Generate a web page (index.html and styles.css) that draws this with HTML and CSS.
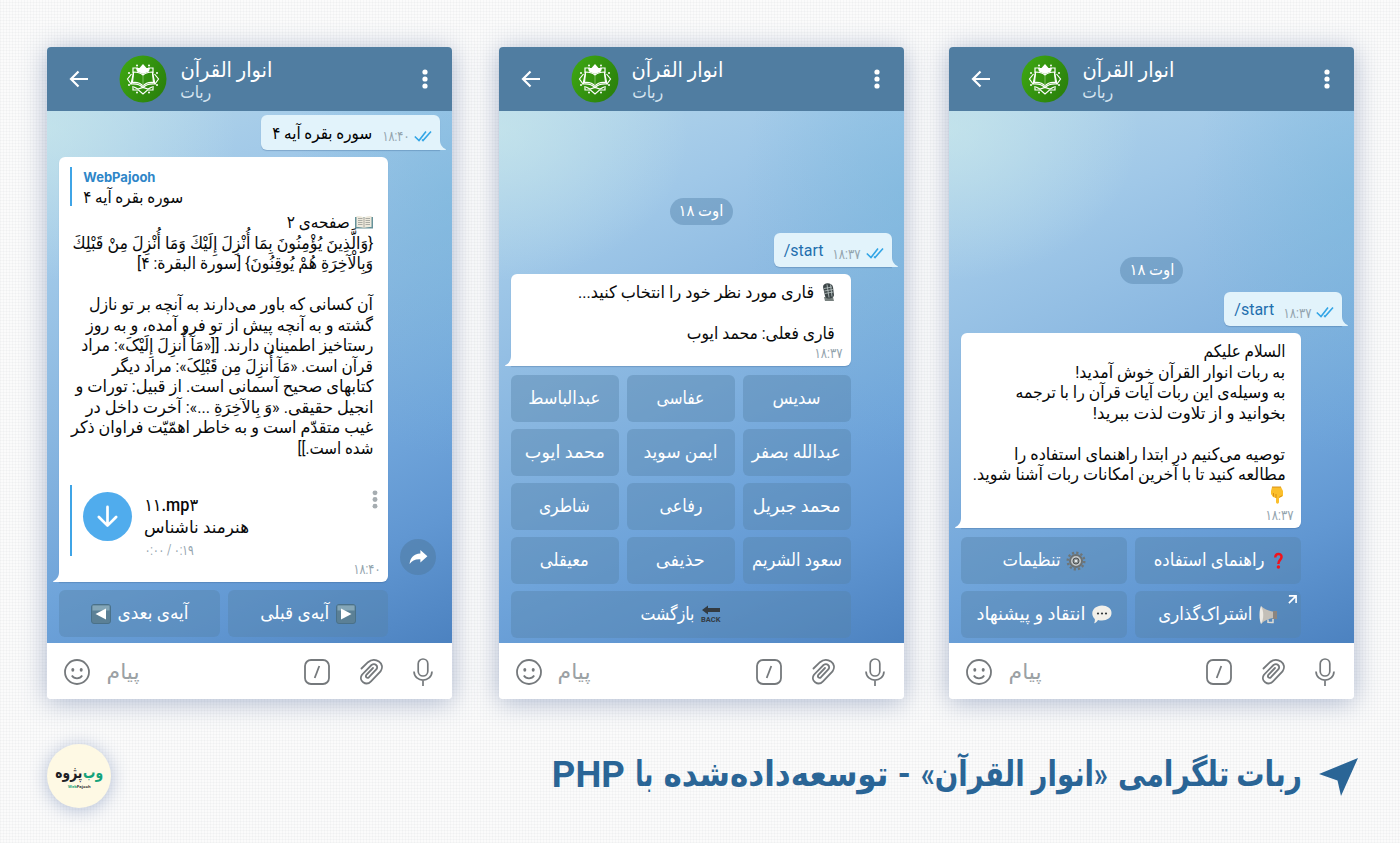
FILE: index.html
```html
<!DOCTYPE html>
<html lang="fa">
<head>
<meta charset="utf-8">
<title>ربات تلگرامی انوار القرآن</title>
<link rel="stylesheet" href="styles.css">
</head>
<body>
<svg class="defs" width="0" height="0">
  <symbol id="back" viewBox="0 0 20 18"><path d="M19 9H2M9.500 1.500L2 9l7.500 7.500" fill="none" stroke="#fff" stroke-width="2.200"/></symbol>
  <symbol id="dots" viewBox="0 0 6 20"><circle cx="3" cy="3" r="2.600"/><circle cx="3" cy="10" r="2.600"/><circle cx="3" cy="17" r="2.600"/></symbol>
  <symbol id="quran" viewBox="0 0 48 48">
    <circle cx="24" cy="24" r="23.500" fill="url(#green)"/>
    <g fill="none" stroke="#fff" stroke-width="1.200">
      <path d="M19 13h-5v5M29 13h5v5M14 31v4h5.500l4.500 4 4.500-4H34v-4M12.500 19l-4 5 3.500 5M35.500 19l4 5-3.500 5"/>
      <path d="M14.500 18l-2.500 11c5-.5 9 .5 12 3.500 3-3 7-4 12-3.500L33.500 18"/>
      <path d="M14.500 17l-1 10.500c4-.5 8 .5 10.500 3.500 2.500-3 6.500-4 10.500-3.500L33.500 17c-4 0-7 1-9.500 3-2.500-2-5.500-3-9.500-3z"/>
      <path d="M15 32l4 2 5-1.500 5 1.500 4-2"/>
    </g>
    <path d="M24 9l3.500 4H31l-1 3.500-6 2.500-6-2.500-1-3.500h3.500z" fill="#fff"/>
    <path d="M24 20v11" stroke="#8fc776" stroke-width=".8"/>
    <g fill="#fff"><circle cx="18" cy="10.500" r="1"/><circle cx="30" cy="10.500" r="1"/><circle cx="10" cy="18" r="1"/><circle cx="38" cy="18" r="1"/><circle cx="10" cy="30" r="1"/><circle cx="38" cy="30" r="1"/><circle cx="18" cy="37.500" r="1"/><circle cx="30" cy="37.500" r="1"/></g>
  </symbol>
  <linearGradient id="green" x1="0" x2="1" y2=".6"><stop offset="0" stop-color="#3fa912"/><stop offset="1" stop-color="#2b820c"/></linearGradient>
  <symbol id="checks" viewBox="0 0 18 12"><path d="M.8 6.500L5 10.500 12 1.500M8 9.500l1 1L17 1.500" fill="none" stroke="#32a5e6" stroke-width="1.600"/></symbol>
  <symbol id="tail" viewBox="0 0 12 18"><path d="M0 0h6v8c0 4 1.800 7.500 6 9.300l-.5.700H0z"/></symbol>
  <symbol id="smile" viewBox="0 0 26 26"><g fill="none" stroke="#75797c" stroke-width="1.800"><circle cx="13" cy="13" r="12"/><path d="M7.800 16.500c2.500 3.700 7.900 3.700 10.400 0"/></g><g fill="#75797c"><ellipse cx="8.800" cy="10.800" rx="1.500" ry="1.900"/><ellipse cx="17.200" cy="10.800" rx="1.500" ry="1.900"/></g></symbol>
  <symbol id="slash" viewBox="0 0 26 26"><g fill="none" stroke="#75797c" stroke-width="1.800"><rect x="1" y="1" width="24" height="24" rx="6"/><path d="M15.300 7L10.700 19"/></g></symbol>
  <symbol id="clip" viewBox="0 0 24 26"><path d="M2.500 9.500L9 3.200c7-6 18 1 12.500 9.300L12 22.300c-5 5.200-13-.6-9-6.600L12.500 6c3.500-2.500 7 1 5 4.200L10 18.200c-2 1.600-4-.5-2.600-2.400L14 9" fill="none" stroke="#75797c" stroke-width="1.800" stroke-linecap="round"/></symbol>
  <symbol id="mic" viewBox="0 0 20 28"><g fill="none" stroke="#75797c" stroke-width="1.700"><rect x="5.200" y="1" width="9.600" height="17" rx="4.800"/><path d="M1 13.500c.5 11.500 17.500 11.500 18 0M10 22v6"/></g></symbol>
  <symbol id="book" viewBox="0 0 18 13"><path d="M0 1h18v11.500H0z" fill="#66929a"/><path d="M1.500 0C4 0 7 .3 9 1.500 11 .3 14 0 16.500 0v11C14 11 11 11 9 12.200 7 11 4 11 1.500 11z" fill="#eee9dc"/><path d="M9 1.500v10.700M3 2.500h4.500M3 4.500h4.500M3 6.500h4.500M3 8.500h4.500M10.500 2.500H15M10.500 4.500H15M10.500 6.500H15M10.500 8.500H15" stroke="#8d908b" stroke-width=".7"/></symbol>
  <symbol id="studio" viewBox="0 0 13 18"><path d="M2 14h9l1 4H3z" fill="#78817f"/><path d="M1 4c0-5 9-5 10 0l1 8c0 4-8 5-9 1z" fill="#3d4648"/><path d="M2 5.500l8-1.500M2.300 8l8.500-1.500M2.800 10.500l8.500-1.500M5 1.500l2 13M8.500 1.500l1.500 12" stroke="#bcc8c6" stroke-width=".8"/></symbol>
  <symbol id="finger" viewBox="0 0 12 18"><path d="M1 1h9l2 4v5l-3 1.500h-1V16c0 2.200-3 2.200-3 0v-4L2 11 0 8V5z" fill="#fbbf2b"/><path d="M5 12V8M2.500 10.500V7M8 11.500l3-1.800M1 1h9" stroke="#d58b12" stroke-width=".9" fill="none"/></symbol>
  <symbol id="play" viewBox="0 0 20 20"><rect x=".5" y=".5" width="19" height="19" rx="2.500" fill="#5b8096" stroke="#4a7189"/><path d="M1.500 1.500h17v5h-17z" fill="#84a6b7"/><path d="M5 4.500l10.500 5.500L5 15.500z" fill="#fff"/></symbol>
  <symbol id="backarrow" viewBox="0 0 20 18"><path d="M1 5l6-4.500V3h12v4H7v2.500z" fill="#333b42"/></symbol>
  <symbol id="question" viewBox="0 0 9 17"><path d="M1.300 5.500C1 .8 7.700.8 7.500 5c0 3-3.200 3-3.100 7" fill="none" stroke="#f3121b" stroke-width="2.500"/><circle cx="4.400" cy="15" r="1.700" fill="#f3121b"/></symbol>
  <symbol id="gear" viewBox="0 0 20 20"><circle cx="10" cy="10" r="8.300" fill="none" stroke="#6e7577" stroke-width="2.400" stroke-dasharray="2.200 2.146"/><circle cx="10" cy="10" r="6" fill="#c3c7c8" stroke="#6b7173" stroke-width="2"/><circle cx="10" cy="10" r="3" fill="#8b9192" stroke="#4d5153" stroke-width="1"/><circle cx="10" cy="10" r="1.300" fill="#e6e9ea"/></symbol>
  <symbol id="horn" viewBox="0 0 19 20"><path d="M2 1c4 3.500 8 5 14 6v6c-6 0-10 2-14 6z" fill="#c3bfb8"/><path d="M2 1c3 5 3 13 0 18C0 15 0 5 2 1z" fill="#edeae4"/><path d="M14 6h4v8h-4z" fill="#8b8580"/><path d="M9 14.500v2.800l5 .2V14" fill="none" stroke="#dedbd4" stroke-width="1.500"/></symbol>
  <symbol id="speech" viewBox="0 0 20 19"><path d="M10 .5c5 0 9.500 2.800 9.500 7.500S15 15.500 10 15.500c-1.500 0-2.800-.1-4-.5-1 2-2.500 3-4 3.300.8-1.300 1-2.600.8-4.300C-3 8 2 .5 10 .5z" fill="#f2f0ea"/><g fill="#34383b"><circle cx="6" cy="8.500" r="1.100"/><circle cx="10" cy="8.500" r="1.100"/><circle cx="14" cy="8.500" r="1.100"/></g></symbol>
</svg>

<main class="phones">
  <section class="phone">
    <header class="bar">
      <svg class="i-back"><use href="#back"/></svg>
      <svg class="avatar"><use href="#quran"/></svg>
      <div class="who"><b class="name"><span class="fit" data-w="92">انوار القرآن</span></b><span class="sub fit" data-w="31">ربات</span></div>
      <svg class="i-dots"><use href="#dots"/></svg>
    </header>
    <div class="chat">
      <div class="out ayah">
        <span class="fit outtext" data-w="100">سوره بقره آیه ۴</span><span class="time fit" data-w="27">۱۸:۴۰</span><svg class="i-checks"><use href="#checks"/></svg>
        <svg class="tail-r"><use href="#tail"/></svg>
      </div>
      <div class="in tall">
        <div class="reply"><strong class="author">WebPajooh</strong><span class="fit" data-w="100">سوره بقره آیه ۴</span></div>
        <div class="text" dir="rtl">
          <p><svg class="e-book"><use href="#book"/></svg><span class="fit" data-w="63">صفحه‌ی ۲</span></p>
          <p><span class="fit" data-w="301">{وَالَّذِينَ يُؤْمِنُونَ بِمَا أُنْزِلَ إِلَيْكَ وَمَا أُنْزِلَ مِنْ قَبْلِكَ</span></p>
          <p><span class="fit" data-w="236">وَبِالْآخِرَةِ هُمْ يُوقِنُونَ} [سورة البقرة: ۴]</span></p>
          <p></p>
          <p><span class="fit" data-w="284">آن کسانی که باور می‌دارند به آنچه بر تو نازل</span></p>
          <p><span class="fit" data-w="287">گشته و به آنچه پیش از تو فرو آمده، و به روز</span></p>
          <p><span class="fit" data-w="292">رستاخیز اطمینان دارند. [[«مَآ أُنزِلَ إِلَیْکَ»: مراد</span></p>
          <p><span class="fit" data-w="261">قرآن است. «مَآ أُنزِلَ مِن قَبْلِکَ»: مراد دیگر</span></p>
          <p><span class="fit" data-w="298">کتابهای صحیح آسمانی است. از قبیل: تورات و</span></p>
          <p><span class="fit" data-w="288">انجیل حقیقی. «وَ بِالآخِرَةِ ...»: آخرت داخل در</span></p>
          <p><span class="fit" data-w="302">غیب متقدّم است و به خاطر اهمّیّت فراوان ذکر</span></p>
          <p><span class="fit" data-w="76">شده است.]]</span></p>
        </div>
        <div class="audio">
          <div class="load"><svg viewBox="0 0 24 24"><path d="M12 2v19M3 12.500l9 9 9-9" fill="none" stroke="#fff" stroke-width="2.800" stroke-linecap="round" stroke-linejoin="round"/></svg></div>
          <div class="track"><strong class="file fit" data-w="54" data-dir="ltr">۱۱.mp۳</strong><span class="fit" data-w="105">هنرمند ناشناس</span><span class="time fit" data-w="49" data-dir="ltr">۰:۰۰ / ۰:۱۹</span></div>
          <svg class="a-dots"><use href="#dots"/></svg>
        </div>
        <span class="time fit stamp" data-w="27">۱۸:۴۰</span>
        <svg class="tail-l"><use href="#tail"/></svg>
      </div>
      <div class="share"><svg viewBox="0 0 20 16"><path d="M12 0l7.500 6.700L12 13.400V9.800C6.500 9.500 3 11 .5 15 1 8.500 4.500 4 12 3.600z" fill="#fff"/></svg></div>
      <div class="keys two narrow">
        <div class="key"><span class="fit" data-w="71">آیه‌ی بعدی</span><svg class="e-play flip"><use href="#play"/></svg></div>
        <div class="key"><svg class="e-play"><use href="#play"/></svg><span class="fit" data-w="69">آیه‌ی قبلی</span></div>
      </div>
    </div>
    <footer class="compose">
      <svg class="i-smile"><use href="#smile"/></svg><span class="hint fit" data-w="33">پیام</span>
      <svg class="i-slash"><use href="#slash"/></svg><svg class="i-clip"><use href="#clip"/></svg><svg class="i-mic"><use href="#mic"/></svg>
    </footer>
  </section>

  <section class="phone middle">
    <header class="bar">
      <svg class="i-back"><use href="#back"/></svg>
      <svg class="avatar"><use href="#quran"/></svg>
      <div class="who"><b class="name"><span class="fit" data-w="92">انوار القرآن</span></b><span class="sub fit" data-w="31">ربات</span></div>
      <svg class="i-dots"><use href="#dots"/></svg>
    </header>
    <div class="chat">
      <div class="date d2"><span class="fit" data-w="45">اوت ۱۸</span></div>
      <div class="out">
        <span class="cmd">/start</span><span class="time fit" data-w="28">۱۸:۳۷</span><svg class="i-checks"><use href="#checks"/></svg>
        <svg class="tail-r"><use href="#tail"/></svg>
      </div>
      <div class="in reciter">
        <div class="text" dir="rtl">
          <p><svg class="e-studio"><use href="#studio"/></svg><span class="fit" data-w="236">قاری مورد نظر خود را انتخاب کنید...</span></p>
          <p></p>
          <p><span class="fit" data-w="148">قاری فعلی: محمد ایوب</span></p>
        </div>
        <span class="time fit stamp" data-w="28">۱۸:۳۷</span>
        <svg class="tail-l"><use href="#tail"/></svg>
      </div>
      <div class="keys three">
        <div class="key"><span class="fit" data-w="72">عبدالباسط</span></div>
        <div class="key"><span class="fit" data-w="48">عفاسی</span></div>
        <div class="key"><span class="fit" data-w="48">سدیس</span></div>
        <div class="key"><span class="fit" data-w="80">محمد ایوب</span></div>
        <div class="key"><span class="fit" data-w="74">ایمن سوید</span></div>
        <div class="key"><span class="fit" data-w="89">عبدالله بصفر</span></div>
        <div class="key"><span class="fit" data-w="51">شاطری</span></div>
        <div class="key"><span class="fit" data-w="43">رفاعی</span></div>
        <div class="key"><span class="fit" data-w="88">محمد جبریل</span></div>
        <div class="key"><span class="fit" data-w="49">معیقلی</span></div>
        <div class="key"><span class="fit" data-w="49">حذیفی</span></div>
        <div class="key"><span class="fit" data-w="90">سعود الشریم</span></div>
        <div class="key full"><span class="e-back"><svg><use href="#backarrow"/></svg><small>BACK</small></span><span class="fit" data-w="54">بازگشت</span></div>
      </div>
    </div>
    <footer class="compose">
      <svg class="i-smile"><use href="#smile"/></svg><span class="hint fit" data-w="33">پیام</span>
      <svg class="i-slash"><use href="#slash"/></svg><svg class="i-clip"><use href="#clip"/></svg><svg class="i-mic"><use href="#mic"/></svg>
    </footer>
  </section>

  <section class="phone">
    <header class="bar">
      <svg class="i-back"><use href="#back"/></svg>
      <svg class="avatar"><use href="#quran"/></svg>
      <div class="who"><b class="name"><span class="fit" data-w="92">انوار القرآن</span></b><span class="sub fit" data-w="31">ربات</span></div>
      <svg class="i-dots"><use href="#dots"/></svg>
    </header>
    <div class="chat">
      <div class="date d3"><span class="fit" data-w="45">اوت ۱۸</span></div>
      <div class="out">
        <span class="cmd">/start</span><span class="time fit" data-w="28">۱۸:۳۷</span><svg class="i-checks"><use href="#checks"/></svg>
        <svg class="tail-r"><use href="#tail"/></svg>
      </div>
      <div class="in welcome">
        <div class="text" dir="rtl">
          <p><span class="fit" data-w="82">السلام علیکم</span></p>
          <p><span class="fit" data-w="210">به ربات انوار القرآن خوش آمدید!</span></p>
          <p><span class="fit" data-w="270">به وسیله‌ی این ربات آیات قرآن را با ترجمه</span></p>
          <p><span class="fit" data-w="193">بخوانید و از تلاوت لذت ببرید!</span></p>
          <p></p>
          <p><span class="fit" data-w="271">توصیه می‌کنیم در ابتدا راهنمای استفاده را</span></p>
          <p><span class="fit" data-w="313">مطالعه کنید تا با آخرین امکانات ربات آشنا شوید.</span></p>
          <p><svg class="e-finger"><use href="#finger"/></svg></p>
        </div>
        <span class="time fit stamp" data-w="28">۱۸:۳۷</span>
        <svg class="tail-l"><use href="#tail"/></svg>
      </div>
      <div class="keys two">
        <div class="key"><svg class="e-gear"><use href="#gear"/></svg><span class="fit" data-w="58">تنظیمات</span></div>
        <div class="key help"><svg class="e-question"><use href="#question"/></svg><span class="fit" data-w="111">راهنمای استفاده</span></div>
        <div class="key"><svg class="e-speech"><use href="#speech"/></svg><span class="fit" data-w="109">انتقاد و پیشنهاد</span></div>
        <div class="key"><svg class="e-horn"><use href="#horn"/></svg><span class="fit" data-w="94">اشتراک‌گذاری</span>
          <svg class="ext" viewBox="0 0 10 10"><path d="M1 1h8v8M9 1L1 9" fill="none" stroke="#fff" stroke-width="1.800"/></svg></div>
      </div>
    </div>
    <footer class="compose">
      <svg class="i-smile"><use href="#smile"/></svg><span class="hint fit" data-w="33">پیام</span>
      <svg class="i-slash"><use href="#slash"/></svg><svg class="i-clip"><use href="#clip"/></svg><svg class="i-mic"><use href="#mic"/></svg>
    </footer>
  </section>
</main>

<div class="caption">
  <div class="brand"><div class="brand-name" dir="rtl"><span class="fit web" data-w="20">وب</span><span class="fit" data-w="27">پژوه</span></div><small><i>Web</i>Pajooh</small></div>
  <h1 dir="rtl">
    <svg class="plane" viewBox="0 0 39 38"><path d="M39 0L22 38 18.500 22.500 0 16z" fill="#2a6596"/></svg>
    <span class="fit" data-w="184">ربات تلگرامی</span>
    <span class="fit" data-w="187">«انوار القرآن»</span>
    <span class="fit" data-w="13">-</span>
    <span class="fit" data-w="225">توسعه‌داده‌شده</span>
    <span class="fit" data-w="18">با</span>
    <span class="fit php" data-w="73" data-dir="ltr">PHP</span>
  </h1>
</div>
<script src="fit.js"></script>
</body>
</html>
```

FILE: styles.css
```css
* { box-sizing: border-box; }
body {
  margin: 0; width: 1400px; height: 843px; overflow: hidden;
  font-family: Roboto, "DejaVu Sans", sans-serif;
  background-color: #fbfbfb;
  background-image:
    repeating-linear-gradient(90deg, rgba(110,120,130,.045) 0 1px, transparent 1px 3px),
    repeating-linear-gradient(0deg, rgba(110,120,130,.045) 0 1px, transparent 1px 3px);
}
svg { display: block; flex: none; }
.defs { position: absolute; }
.fit { display: inline-block; white-space: nowrap; flex: none; }
.fit > bdi { display: inline-block; transform-origin: right center; }
p { margin: 0; }

.phones { display: flex; padding: 47px 0 0 47.300px; }
.phone {
  width: 405px; height: 652px; border-radius: 4px; flex: none;
  display: flex; flex-direction: column;
  box-shadow: 0 3px 26px rgba(80,105,155,.45);
}
.middle { margin: 0 45.600px 0 46.400px; }
.bar {
  height: 64px; background: #507da1; border-radius: 4px 4px 0 0;
  display: flex; align-items: center; padding: 0 24px 0 22px; color: #fff;
}
.i-back { width: 20px; height: 18px; margin-right: 30px; }
.avatar { width: 48px; height: 48px; }
.who { flex: 1; margin-left: 13px; display: flex; flex-direction: column; align-items: flex-start; }
.name { font-weight: 400; font-size: 21px; line-height: 24px; height: 24px; margin-top: 2px; }
.sub { font-size: 17px; line-height: 19px; color: #d5e4f0; margin-top: 1px; }
.i-dots { width: 6px; height: 20px; fill: #fff; }

.chat {
  height: 532px; position: relative; padding: 0 12px;
  display: flex; flex-direction: column;
  background:
    radial-gradient(ellipse 190px 150px at 0 20px, rgba(205,235,236,.6), transparent),
    radial-gradient(ellipse 160px 260px at 100% 90px, rgba(120,185,220,.45), transparent),
    linear-gradient(155deg, #b4d6ea 0%, #a0c8e8 22%, #88b6e0 46%, #6fa4da 68%, #6197d2 82%, #4c82c0 100%);
}
.out {
  position: relative; align-self: flex-end; height: 34px; width: 118px; background: #e2f3fb;
  border-radius: 6px 6px 0 6px; display: flex; align-items: center; padding: 0 9px 0 10px;
  box-shadow: 0 1px 1px rgba(50,90,140,.3); font-size: 17px; flex: none;
}
.ayah { width: 179px; height: 35px; margin-top: 4px; padding-left: 11px; }
.cmd { color: #1f6fae; width: 49px; font-size: 16px; flex: none; }
.outtext { margin-right: 10px; }
.time { font-size: 14px; color: #93a4ae; line-height: 14px; }
.out .time { margin: 7px 5px 0 0; }
.i-checks { width: 18px; height: 12px; margin-top: 6px; }
.tail-r, .tail-l { position: absolute; bottom: 0; width: 12px; height: 18px; fill: #e2f3fb; }
.tail-r { right: -6px; }
.tail-l { left: -6px; fill: #fff; transform: scaleX(-1); }
.in {
  position: relative; width: 340px; background: #fff; border-radius: 6px 6px 6px 0; flex: none;
  margin-top: 7px; box-shadow: 0 1px 1px rgba(50,90,140,.3); font-size: 17px; color: #08090a;
}
.tall { width: 329px; height: 425px; padding: 10px 15px 0 11px; }
.reciter { height: 92px; padding: 8px 16px 0; }
.welcome { height: 195px; padding: 8px 16px 0; }
.text p { height: 20.550px; line-height: 20.550px; display: flex; align-items: center; }
.reply {
  border-left: 2px solid #3fa4e6; height: 39px; padding-left: 11px; margin-bottom: 6px;
  display: flex; flex-direction: column; line-height: 21px;
}
.author { color: #2e86c8; font: 700 13px/20px Inter, sans-serif; }
.audio { display: flex; margin-top: 26px; height: 71px; border-left: 2px solid #3fa4e6; padding: 7px 0 0 11px; }
.load { width: 49px; height: 49px; border-radius: 50%; background: #50aced; display: flex; align-items: center; justify-content: center; }
.load svg { width: 23px; height: 23px; }
.track { flex: 1; margin-left: 12px; margin-top: 2px; display: flex; flex-direction: column; align-items: flex-start; line-height: 23px; }
.file { font-weight: 500; font-size: 17.500px; line-height: 23px; height: 22px; }
.track .time { margin-top: 4px; }
.a-dots { width: 6px; height: 19px; fill: #a6adb1; margin-right: -5px; margin-top: -2px; }
.stamp { position: absolute; right: 8px; bottom: 6px; }
.share {
  position: absolute; left: 353px; top: 428px; width: 36px; height: 36px; border-radius: 50%;
  background: rgba(80,125,165,.6); display: flex; align-items: center; justify-content: center;
}
.share svg { width: 19px; height: 15px; }
.date {
  align-self: center; width: 63px; height: 27px; border-radius: 14px; background: rgba(85,130,170,.45);
  color: #fff; font-size: 16px; display: flex; align-items: center; justify-content: center; flex: none;
  margin: 87px 0 8px; padding-bottom: 2px;
}
.d3 { margin-top: 146px; }

.keys { display: grid; gap: 7px 8px; width: 340px; margin-top: 9px; grid-auto-rows: 47px; }
.two { grid-template-columns: 1fr 1fr; }
.three { grid-template-columns: repeat(3, 1fr); }
.narrow { width: 329px; margin-top: 8px; }
.full { grid-column: 1 / -1; }
.key {
  position: relative; background: rgba(85,130,170,.42); border-radius: 6px; color: #fff; font-size: 18px;
  display: flex; flex-direction: row-reverse; align-items: center; justify-content: center; gap: 6px;
}
.key .fit { margin-bottom: 3px; }
.help { padding-right: 0; }
.ext { position: absolute; right: 4px; top: 4px; width: 9px; height: 9px; }
.e-book { width: 18px; height: 13px; margin-left: 6px; }
.e-studio { width: 13px; height: 18px; margin-left: 8px; }
.e-finger { width: 12px; height: 18px; margin-right: 2px; }
.e-play { width: 20px; height: 20px; }
.flip { transform: scaleX(-1); }
.e-back { width: 20px; height: 19px; display: flex; flex-direction: column; align-items: center; color: #333b42; }
.e-back svg { width: 20px; height: 18px; margin-bottom: -7px; }
.e-back small { font: 700 7.500px/8px Roboto, sans-serif; }
.e-question { width: 9px; height: 17px; margin-left: 4px; }
.e-gear { width: 20px; height: 20px; }
.e-horn { width: 19px; height: 20px; }
.e-speech { width: 20px; height: 19px; }

.compose {
  height: 56px; background: #fff; border-radius: 0 0 4px 4px; display: flex; align-items: center;
  padding: 1px 19px 0 17px;
}
.i-smile { width: 26px; height: 26px; margin-right: 16px; }
.hint { color: #9ba1a4; font-size: 21px; }
.i-slash { width: 26px; height: 26px; margin-left: auto; margin-right: 29px; }
.i-clip { width: 24px; height: 26px; margin-right: 30px; }
.i-mic { width: 20px; height: 28px; }

.caption { display: flex; justify-content: space-between; align-items: flex-start; padding: 45px 42px 0 47.300px; }
.brand {
  width: 64px; height: 64px; border-radius: 50%; background: #fef9e4; box-shadow: 0 2px 18px rgba(70,100,160,.4);
  display: flex; flex-direction: column; align-items: center;
}
.brand-name { display: flex; font-size: 16px; font-weight: 700; line-height: 18px; margin-top: 20px; color: #1e2226; }
.web { color: #15a37b; }
.brand small { font: 700 4px/6px "Open Sans", sans-serif; color: #333; margin-top: 2px; }
.brand i { color: #15a37b; font-style: normal; }
h1 { margin: 7px 0 0; display: flex; gap: 10px; font-size: 35px; line-height: 48px; color: #2a6596; font-weight: 700; }
.plane { width: 39px; height: 38px; margin: 7px 0 0 7px; }
.php { font-size: 36px; }
```

FILE: fit.js
```js
// Scale each label horizontally so that it fills its measured column width.
document.querySelectorAll('.fit').forEach(function (el) {
  var inner = document.createElement('bdi');
  inner.dir = el.dataset.dir || 'rtl';
  while (el.firstChild) inner.appendChild(el.firstChild);
  el.appendChild(inner);
  el.style.direction = 'rtl';
  var natural = inner.getBoundingClientRect().width;
  el.style.width = el.dataset.w + 'px';
  inner.style.transform = 'scaleX(' + (el.dataset.w / natural) + ')';
});
```
